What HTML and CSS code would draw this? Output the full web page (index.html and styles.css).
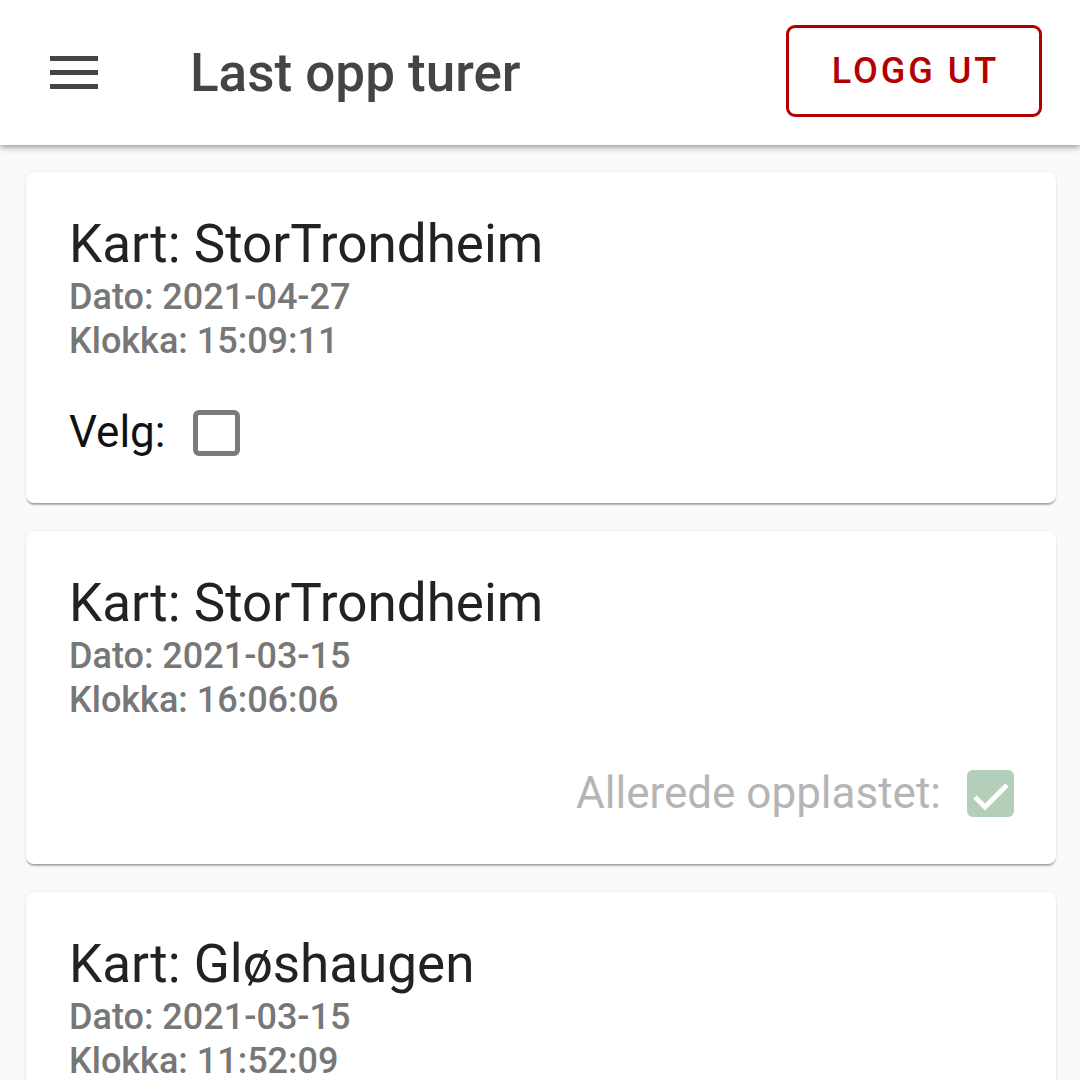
FILE: index.html
```html
<!DOCTYPE html>
<html lang="no">
<head>
<meta charset="utf-8">
<title>Last opp turer</title>
<link rel="stylesheet" href="styles.css">
</head>
<body>
<header class="appbar">
  <svg class="menu-icon" width="48" height="34" viewBox="0 0 48 34" aria-hidden="true">
    <rect x="0" y="0" width="48" height="5" fill="#444"/>
    <rect x="0" y="14" width="48" height="5" fill="#444"/>
    <rect x="0" y="28" width="48" height="5" fill="#444"/>
  </svg>
  <h1 class="appbar-title">Last opp turer</h1>
  <button class="logout">LOGG UT</button>
</header>
<main class="list">
  <section class="card">
    <h2 class="card-title">Kart: StorTrondheim</h2>
    <p class="meta">Dato: 2021-04-27</p>
    <p class="meta">Klokka: 15:09:11</p>
    <div class="row row-left">
      <span class="row-label">Velg:</span>
      <span class="box box-empty"></span>
    </div>
  </section>
  <section class="card">
    <h2 class="card-title">Kart: StorTrondheim</h2>
    <p class="meta">Dato: 2021-03-15</p>
    <p class="meta">Klokka: 16:06:06</p>
    <div class="row row-right">
      <span class="row-label muted">Allerede opplastet:</span>
      <span class="box box-done">
        <svg width="47" height="47" viewBox="0 0 47 47" aria-hidden="true"><path d="M8 27 L18 37 L40 15" fill="none" stroke="#fff" stroke-width="5"/></svg>
      </span>
    </div>
  </section>
  <section class="card">
    <h2 class="card-title">Kart: Gløshaugen</h2>
    <p class="meta">Dato: 2021-03-15</p>
    <p class="meta">Klokka: 11:52:09</p>
    <div class="row row-left">
      <span class="row-label">Velg:</span>
      <span class="box box-empty"></span>
    </div>
  </section>
</main>
</body>
</html>
```
FILE: styles.css
```css
html, body {
  margin: 0;
  padding: 0;
}
body {
  background: #fafafa;
  font-family: Roboto, "Noto Sans", sans-serif;
  width: 1080px;
  height: 1080px;
  overflow: hidden;
}
.appbar {
  position: relative;
  z-index: 2;
  height: 145px;
  background: #fff;
  display: flex;
  align-items: center;
  box-shadow: 0 2px 4px -1px rgba(0,0,0,.2), 0 4px 5px 0 rgba(0,0,0,.14), 0 1px 10px 0 rgba(0,0,0,.12);
}
.menu-icon {
  margin-left: 50px;
  margin-top: 1px;
}
.appbar-title {
  margin: 0 0 0 92px;
  font-size: 53px;
  line-height: 62px;
  font-weight: 500;
  color: #444;
  flex: 1;
}
.logout {
  margin-right: 38px;
  width: 256px;
  height: 92px;
  margin-top: -3px;
  background: #fff;
  border: 3px solid #b30000;
  border-radius: 9px;
  color: #b30000;
  font-family: Roboto, sans-serif;
  font-size: 36px;
  font-weight: 500;
  letter-spacing: 3px;
  padding: 0 0 0 3px;
}
.list {
  padding: 27px 24px 0 26px;
  display: flex;
  flex-direction: column;
  gap: 28px;
}
.card {
  background: #fff;
  border-radius: 8px;
  box-shadow: 0 3px 2px -1px rgba(0,0,0,.28), 0 1px 2px 0 rgba(0,0,0,.1), 0 0 2px 0 rgba(0,0,0,.08);
  padding: 42px 42px 45px 43px;
}
.card-title {
  margin: 0;
  font-size: 53px;
  font-weight: 400;
  line-height: 61px;
  color: #222;
}
.meta {
  margin: 0;
  font-size: 36px;
  font-weight: 500;
  line-height: 44px;
  color: #777;
}
.row {
  display: flex;
  align-items: center;
  gap: 28px;
  margin-top: 43px;
  height: 52px;
}
.row-right {
  justify-content: flex-end;
  margin-top: 45px;
  gap: 26px;
}
.row-label {
  font-size: 44px;
  line-height: 52px;
  color: #111;
}
.row-label.muted {
  color: #b5b5b5;
}
.box {
  box-sizing: border-box;
  width: 47px;
  height: 46px;
  border-radius: 6px;
  display: inline-flex;
  align-items: center;
  justify-content: center;
  margin-top: 2px;
}
.box-empty {
  border: 5px solid #7a7a7a;
}
.box-done {
  background: #b4cfb9;
  height: 47px;
  margin-top: 0;
}
```
